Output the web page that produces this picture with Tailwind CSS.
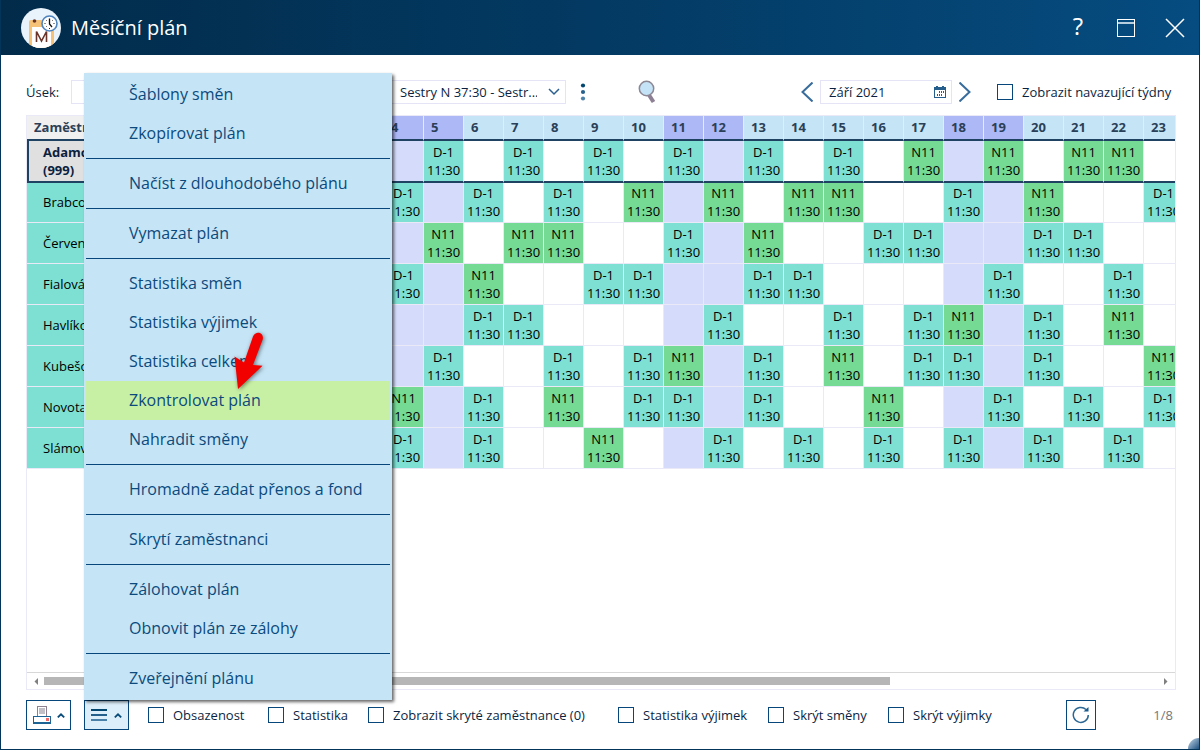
<!DOCTYPE html>
<html lang="cs">
<head>
<meta charset="utf-8">
<title>Měsíční plán</title>
<script src="https://cdn.jsdelivr.net/npm/@tailwindcss/browser@4"></script>
</head>
<body class="flex h-screen flex-col overflow-hidden border-x border-b border-[#03355a] bg-white font-['Open_Sans','Noto_Sans',sans-serif] text-[13px] leading-[18px] text-[#0b1f3f]">

<header class="flex h-[55px] shrink-0 items-center bg-linear-to-r from-[#022b4a] via-[#033a63] to-[#064c80] pr-3 pl-5 text-white">
  <svg class="size-10 shrink-0" viewBox="0 0 40 40" aria-hidden="true">
    <defs><clipPath id="disc"><circle cx="20" cy="20" r="20"/></clipPath></defs>
    <circle cx="20" cy="20" r="20" fill="#e9f3fb"/>
    <g clip-path="url(#disc)">
      <rect x="8" y="12" width="25" height="30" rx="2" fill="#f5c277"/>
      <rect x="11" y="19" width="19" height="24" fill="#fff"/>
      <circle cx="13.500" cy="13" r="1.800" fill="#6b3429"/>
      <path d="M15.500 34V23.500L20.500 33L25.500 23.500V34" fill="none" stroke="#6b3429" stroke-width="1.600"/>
    </g>
    <circle cx="28.500" cy="15.500" r="7.500" fill="#fff" stroke="#4e83bd" stroke-width="1.600"/>
    <path d="M28.500 10.500V16L31 19" fill="none" stroke="#111" stroke-width="1.300"/>
    <path d="M23.500 15.500h1M32.500 15.500h1M28.500 20v1M25 12l.6.6M32 12l-.6.6M25 19l.6-.6" stroke="#222" stroke-width="1"/>
  </svg>
  <h1 class="ml-[10px] flex-1 text-[20px] leading-7">Měsíční plán</h1>
  <button class="mr-6 flex size-6 items-center justify-center pb-1 text-[24px] leading-6" aria-label="Nápověda">?</button>
  <button class="mr-[25px] flex size-6 items-center justify-center" aria-label="Maximalizovat">
    <svg class="size-5" viewBox="0 0 20 20" fill="none" stroke="#fff" shape-rendering="crispEdges"><path d="M1.500 1.500h17v17h-17z"/><path d="M2 5h16" stroke="#b8cddd" stroke-width="2"/></svg>
  </button>
  <button class="flex size-6 items-center justify-center" aria-label="Zavřít">
    <svg class="size-5" viewBox="0 0 20 20" fill="none" stroke="#fff" stroke-width="1.500"><path d="M1 1l18 18M19 1L1 19"/></svg>
  </button>
</header>

<main class="flex min-h-0 flex-1 flex-col pt-[25px] pr-[23px] pb-[19px] pl-[25px]">

  <div class="flex h-6 shrink-0 items-center">
    <label for="usek" class="w-[45px] shrink-0">Úsek:</label>
    <input id="usek" type="text" class="h-6 w-[300px] border border-[#e4e4f6] px-2">
    <div class="relative ml-2 h-6 w-[187px]">
      <select aria-label="Úsek a skupina" class="h-6 w-full appearance-none border border-[#e4e4f6] bg-white pr-7 pl-5 leading-[18px]"><option>Sestry N 37:30 - Sestr...</option></select>
      <svg class="pointer-events-none absolute top-2 right-[6px] h-2 w-3" viewBox="0 0 12 8" fill="none" stroke="#2b608f" stroke-width="1.500"><path d="M1 1l5 5 5-5"/></svg>
    </div>
    <button class="ml-[7px] flex h-6 w-5 items-center justify-center" aria-label="Další možnosti">
      <svg class="h-5 w-2" viewBox="0 0 8 20"><circle cx="4" cy="3.500" r="2.100" fill="#03466f"/><circle cx="4" cy="10" r="2.100" fill="#27618c"/><circle cx="4" cy="16.500" r="2.100" fill="#4f82a8"/></svg>
    </button>
    <button class="ml-11 flex h-6 w-5 items-center justify-center" aria-label="Hledat">
      <svg class="h-6 w-5 shrink-0" viewBox="0 0 20 24"><path d="M12 15l4.500 7" stroke="#8d7f94" stroke-width="4"/><circle cx="9.500" cy="8.500" r="7.200" fill="#c5e3f6" stroke="#8d8794" stroke-width="1.500"/></svg>
    </button>
    <span class="flex-1"></span>
    <button class="flex h-6 w-4 items-center justify-center" aria-label="Předchozí měsíc">
      <svg class="h-5 w-3" viewBox="0 0 12 20" fill="none" stroke="#386c9c" stroke-width="2"><path d="M11.500 .5L1.500 10l10 9.500"/></svg>
    </button>
    <div class="relative mx-[5px] h-6 w-[132px]">
      <input aria-label="Měsíc" type="text" value="Září 2021" class="h-6 w-full border border-[#e4e4f6] px-2">
      <svg class="pointer-events-none absolute top-[6px] right-[6px] h-3 w-3" viewBox="0 0 12 12" shape-rendering="crispEdges"><path d="M0 1h12v11H0zM2 0h2v1H2zM8 0h2v1H8z" fill="#265f8e"/><path d="M1 4h10v7H1z" fill="#fff"/><path d="M5 5h1v2H5zM7 5h1v2H7zM9 5h1v2H9zM3 8h1v2H3zM5 8h1v2H5zM7 8h1v2H7z" fill="#265f8e"/></svg>
    </div>
    <button class="flex h-6 w-4 items-center justify-center" aria-label="Další měsíc">
      <svg class="h-5 w-3" viewBox="0 0 12 20" fill="none" stroke="#386c9c" stroke-width="2"><path d="M.5 .5l10 9.500-10 9.500"/></svg>
    </button>
    <label class="ml-6 flex w-[179px] items-center gap-[9px] whitespace-nowrap"><input type="checkbox" class="size-4 shrink-0 appearance-none border border-[#07467a] bg-white">Zobrazit navazující týdny</label>
  </div>

  <div class="mt-[11px] flex min-h-0 flex-1 flex-col border border-[#e9e9f8]">
    <div class="min-h-0 flex-1 overflow-hidden">
      <table class="w-[1157px] table-fixed border-separate border-spacing-0 text-black">
        <colgroup id="cols"><col class="w-[237px]"></colgroup>
        <thead><tr id="days" class="h-[25px]"><th class="border-b-2 border-[#1f4262] bg-[#f0f0f0] p-0 pb-px pl-[7px] text-left font-bold text-[#2a4058]">Zaměstnanec</th></tr></thead>
        <tbody id="plan"></tbody>
      </table>
    </div>
    <div class="flex h-[17px] shrink-0 items-center border-t border-[#d8d8d8] px-[6px]">
      <svg class="size-[7px]" viewBox="0 0 7 7"><path d="M5 0v7L1.500 3.500z" fill="#808080"/></svg>
      <div class="mx-1 flex-1"><div class="h-2 w-[75.9%] bg-[#b6b6b6]"></div></div>
      <svg class="size-[7px]" viewBox="0 0 7 7"><path d="M2 0v7l3.500-3.500z" fill="#808080"/></svg>
    </div>
  </div>

  <footer class="mt-[10px] flex h-[30px] shrink-0 items-center">
    <button class="flex h-[30px] w-[45px] items-center justify-center gap-[6px] border border-[#07467a]" aria-label="Tisk">
      <svg class="h-[18px] w-[18px]" viewBox="0 0 18 18" fill="none" shape-rendering="crispEdges"><path d="M4.500 10V.5h9V10" stroke="#8d8190"/><path d="M6 2h6v6H6z" fill="#c3bfc7"/><path d="M.5 10.500h17v7H.5z" fill="#fff" stroke="#1d6393"/><path d="M0 16h18v2H0z" fill="#1d6393"/><path d="M13 12h3v3h-3z" fill="#f06868"/></svg>
      <svg class="h-[5px] w-[8px]" viewBox="0 0 8 5" fill="none" stroke="#064a78" stroke-width="1.800"><path d="M.8 4.300L4 1.300l3.200 3"/></svg>
    </button>
    <div class="relative ml-[13px]">
      <button class="flex h-[30px] w-[45px] items-center justify-center gap-[7px] border border-[#07467a] bg-[#dceefa]" aria-label="Nabídka" aria-expanded="true">
        <svg class="h-3 w-4" viewBox="0 0 16 12"><path d="M0 0h16v2H0z" fill="#03466f"/><path d="M0 5h16v2H0z" fill="#245f8c"/><path d="M0 10h16v2H0z" fill="#4a7fa8"/></svg>
        <svg class="h-[5px] w-[8px]" viewBox="0 0 8 5" fill="none" stroke="#064a78" stroke-width="1.800"><path d="M.8 4.300L4 1.300l3.200 3"/></svg>
      </button>
      <div class="absolute bottom-full left-0 z-10 w-[308px] bg-[#c5e5f6] p-[2px] text-[16px] leading-[39px] text-[#0b4a7d] shadow-[2px_2px_3px_rgba(0,0,0,0.6)]">
        <button class="block h-[39px] w-full pl-[43px] text-left">Šablony směn</button>
        <button class="block h-[39px] w-full pl-[43px] text-left">Zkopírovat plán</button>
        <hr class="my-[5px] border-[#07467a]">
        <button class="block h-[39px] w-full pl-[43px] text-left">Načíst z dlouhodobého plánu</button>
        <hr class="my-[5px] border-[#07467a]">
        <button class="block h-[39px] w-full pl-[43px] text-left">Vymazat plán</button>
        <hr class="my-[5px] border-[#07467a]">
        <button class="block h-[39px] w-full pl-[43px] text-left">Statistika směn</button>
        <button class="block h-[39px] w-full pl-[43px] text-left">Statistika výjimek</button>
        <button class="block h-[39px] w-full pl-[43px] text-left">Statistika celkem</button>
        <div class="relative">
          <button class="block h-[39px] w-full bg-[#c8f0a5] pl-[43px] text-left">Zkontrolovat plán</button>
          <svg class="pointer-events-none absolute bottom-[31px] left-[147px] h-[60px] w-[32px] drop-shadow-[1px_1px_2px_rgba(0,0,0,0.5)]" viewBox="0 0 32 60" aria-hidden="true"><path d="M5 60L1.500 27.500l9.500 6L20 7.500C23 .5 32 4 29.500 11L20 36l9.500.8z" fill="#f20000"/></svg>
        </div>
        <button class="block h-[39px] w-full pl-[43px] text-left">Nahradit směny</button>
        <hr class="my-[5px] border-[#07467a]">
        <button class="block h-[39px] w-full pl-[43px] text-left">Hromadně zadat přenos a fond</button>
        <hr class="my-[5px] border-[#07467a]">
        <button class="block h-[39px] w-full pl-[43px] text-left">Skrytí zaměstnanci</button>
        <hr class="my-[5px] border-[#07467a]">
        <button class="block h-[39px] w-full pl-[43px] text-left">Zálohovat plán</button>
        <button class="block h-[39px] w-full pl-[43px] text-left">Obnovit plán ze zálohy</button>
        <hr class="my-[5px] border-[#07467a]">
        <button class="block h-[39px] w-full pl-[43px] text-left">Zveřejnění plánu</button>
      </div>
    </div>
    <label class="ml-[19px] flex w-[120px] items-center gap-[9px] whitespace-nowrap"><input type="checkbox" class="size-4 shrink-0 appearance-none border border-[#07467a]">Obsazenost</label>
    <label class="flex w-[100px] items-center gap-[9px] whitespace-nowrap"><input type="checkbox" class="size-4 shrink-0 appearance-none border border-[#07467a]">Statistika</label>
    <label class="flex w-[250px] items-center gap-[9px] whitespace-nowrap"><input type="checkbox" class="size-4 shrink-0 appearance-none border border-[#07467a]">Zobrazit skryté zaměstnance (0)</label>
    <label class="flex w-[150px] items-center gap-[9px] whitespace-nowrap"><input type="checkbox" class="size-4 shrink-0 appearance-none border border-[#07467a]">Statistika výjimek</label>
    <label class="flex w-[120px] items-center gap-[9px] whitespace-nowrap"><input type="checkbox" class="size-4 shrink-0 appearance-none border border-[#07467a]">Skrýt směny</label>
    <label class="flex w-[120px] items-center gap-[9px] whitespace-nowrap"><input type="checkbox" class="size-4 shrink-0 appearance-none border border-[#07467a]">Skrýt výjimky</label>
    <span class="flex-1"></span>
    <button class="mr-[57px] flex size-[30px] items-center justify-center border border-[#07467a]" aria-label="Obnovit">
      <svg class="size-[18px]" viewBox="0 0 18 18" fill="none"><path d="M16.300 9A7.500 7.500 0 1 1 14 3.500" stroke="#2b6794" stroke-width="1.500"/><path d="M16.500 1v4.500h-5z" fill="#1b5b8b"/></svg>
    </button>
    <span class="mr-[3px] text-[#777]">1/8</span>
  </footer>
</main>
<div class="pointer-events-none absolute right-px bottom-px size-[11px] rounded-tl-full bg-linear-to-br from-[#cfe0ec] to-[#1a5180]" aria-hidden="true"></div>

<script>
const weekend = [4, 5, 11, 12, 18, 19];
// Shifts of each employee: day -> D (D-1) or N (N11)
const staff = [
  ['Adamcová (999)', {D: [5, 7, 9, 11, 13, 15], N: [17, 19, 21, 22]}],
  ['Brabcová', {D: [4, 6, 8, 18, 23], N: [10, 12, 14, 15, 20]}],
  ['Červená', {D: [11, 16, 17, 20, 21], N: [5, 7, 8, 13]}],
  ['Fialová', {D: [4, 9, 10, 13, 14, 19, 22], N: [6]}],
  ['Havlíková', {D: [6, 7, 12, 15, 17, 20], N: [18, 22]}],
  ['Kubešová', {D: [5, 8, 10, 13, 17, 18, 20], N: [11, 15, 23]}],
  ['Novota', {D: [6, 10, 11, 13, 19, 21, 23], N: [4, 8, 16]}],
  ['Slámová', {D: [4, 6, 12, 14, 16, 18, 20, 22], N: [9]}]
];
const cols = document.getElementById('cols');
const days = document.getElementById('days');
const plan = document.getElementById('plan');
for (let d = 1; d <= 23; d++) {
  const col = document.createElement('col');
  col.className = 'w-10';
  cols.append(col);
  const th = document.createElement('th');
  th.className = 'border-r border-b-2 border-r-[#e9e9f8] border-b-[#1f4262] p-0 pb-px pl-[7px] text-left font-bold text-[#2a4058]';
  th.classList.add(weekend.includes(d) ? 'bg-[#adb8f7]' : 'bg-[#c5e5f6]');
  th.textContent = d;
  days.append(th);
}
staff.forEach(([name, shifts], i) => {
  const tr = document.createElement('tr');
  tr.className = i === 0 ? 'h-[42px]' : i === 1 ? 'h-10' : 'h-[41px]';
  const th = document.createElement('th');
  th.scope = 'row';
  th.className = i === 0
    ? 'border-b-2 border-l-2 border-[#1f4262] bg-[#e0e0e0] p-0 pl-[14px] text-left font-bold text-[#0b1f3f]'
    : 'border-b border-[#e9e9f8] bg-[#7de0d3] p-0 pb-px pl-4 text-left font-normal';
  th.innerHTML = name.replace(' ', '<br>');
  tr.append(th);
  for (let d = 1; d <= 23; d++) {
    const td = document.createElement('td');
    td.className = i === 0
      ? 'border-r border-b-2 border-r-[#e9e9f8] border-b-[#1f4262] p-0 text-center'
      : 'border-r border-b border-[#e9e9f8] p-0 pb-px text-center';
    if (shifts.D.includes(d)) {
      td.classList.add('bg-[#7de0d3]');
      td.innerHTML = 'D-1<br>11:30';
    } else if (shifts.N.includes(d)) {
      td.classList.add('bg-[#74da94]');
      td.innerHTML = 'N11<br>11:30';
    } else if (weekend.includes(d)) {
      td.classList.add('bg-[#d5dbfb]');
    }
    tr.append(td);
  }
  plan.append(tr);
});
</script>
</body>
</html>
